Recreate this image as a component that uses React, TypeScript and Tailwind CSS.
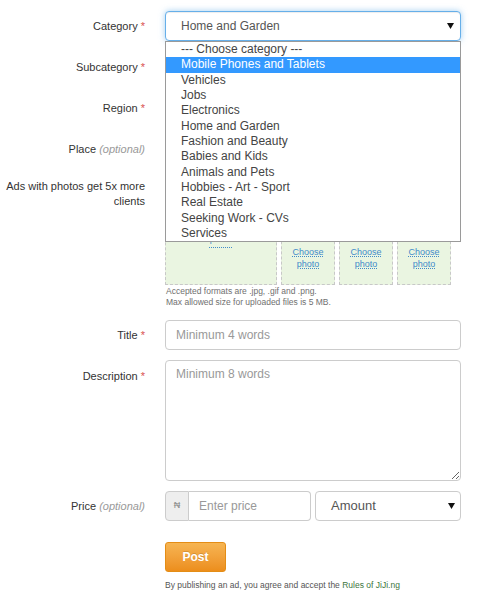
import React from "react";

const FONT = "font-['Liberation_Sans',Arial,Helvetica,sans-serif]";

function Req() {
  return <span className="text-[#d9534f]"> *</span>;
}
function Opt() {
  return <span className="italic text-[#999]"> (optional)</span>;
}

function Arrow() {
  return (
    <svg width="7" height="6" viewBox="0 0 7 6" className="block">
      <path d="M0 0 H7 L3.5 6 Z" fill="#111" />
    </svg>
  );
}

function FakeSelect({ text, focused }: { text: string; focused?: boolean }) {
  return (
    <div
      className={
        "flex h-[30px] items-center justify-between rounded-[4px] border bg-white pl-[15px] pr-[6px] text-[12px] text-[#555] " +
        (focused
          ? "border-[#66afe9] shadow-[inset_0_1px_1px_rgba(0,0,0,0.075),0_0_6px_rgba(102,175,233,0.6)]"
          : "border-[#ccc]")
      }
    >
      <span>{text}</span>
      <Arrow />
    </div>
  );
}

const categories = [
  "--- Choose category ---",
  "Mobile Phones and Tablets",
  "Vehicles",
  "Jobs",
  "Electronics",
  "Home and Garden",
  "Fashion and Beauty",
  "Babies and Kids",
  "Animals and Pets",
  "Hobbies - Art - Sport",
  "Real Estate",
  "Seeking Work - CVs",
  "Services",
];

function Row({
  label,
  children,
  className = "",
  labelClass = "items-center",
}: {
  label: React.ReactNode;
  children: React.ReactNode;
  className?: string;
  labelClass?: string;
}) {
  return (
    <div className={"flex " + className}>
      <div className={"flex w-[145px] shrink-0 justify-end text-right text-[11px] leading-[15px] text-[#333] " + labelClass}>
        <div>{label}</div>
      </div>
      <div className="ml-[20px] w-[296px]">{children}</div>
    </div>
  );
}

function PhotoBox({ big }: { big?: boolean }) {
  return (
    <div
      className={
        "flex flex-col items-center justify-center border border-dashed border-[#c8c8c8] bg-[#eaf5e1] text-center text-[9px] leading-[12px] text-[#428bca] " +
        (big ? "col-span-2 row-span-2 pt-[8px]" : "")
      }
    >
      <span className={"underline decoration-dotted " + (big ? "underline-offset-[5px]" : "underline-offset-[1px]")}>Choose</span>
      <span className={"underline decoration-dotted " + (big ? "underline-offset-[5px]" : "underline-offset-[1px]")}>photo</span>
    </div>
  );
}

export default function App() {
  return (
    <div className={"relative h-[609px] w-[495px] overflow-hidden bg-white " + FONT}>
      <div className="flex flex-col pt-[11px]">
        <Row label={<>Category<Req /></>} className="h-[30px]">
          <div className="relative">
            <FakeSelect text="Home and Garden" focused />
            <div className="absolute left-0 top-[30px] z-10 w-[296px] border border-[#9a9a9a] bg-white">
              {categories.map((c, i) => (
                <div
                  key={c}
                  className={
                    "h-[15.33px] pl-[15px] text-[12px] leading-[15.33px] " +
                    (i === 1 ? "bg-[#3399ff] text-white" : "text-[#444]")
                  }
                >
                  {c}
                </div>
              ))}
            </div>
          </div>
        </Row>
        <Row label={<>Subcategory<Req /></>} className="mt-[11px] h-[30px]">
          <FakeSelect text="" />
        </Row>
        <Row label={<>Region<Req /></>} className="mt-[11px] h-[30px]">
          <FakeSelect text="" />
        </Row>
        <Row label={<>Place<Opt /></>} className="mt-[11px] h-[30px]">
          <FakeSelect text="" />
        </Row>
        <Row
          label={<>Ads with photos get 5x more clients</>}
          className="mt-[9px]"
          labelClass="items-start pt-[6px]"
        >
          <div className="grid w-[286px] grid-cols-[repeat(5,54px)] grid-rows-[repeat(2,54px)] gap-[4px]">
            <PhotoBox big />
            <PhotoBox />
            <PhotoBox />
            <PhotoBox />
            <PhotoBox />
            <PhotoBox />
            <PhotoBox />
          </div>
          <div className="mt-[1px] pl-[1px] text-[8.5px] leading-[11px] text-[#707070]">
            <div>Accepted formats are .jpg, .gif and .png.</div>
            <div>Max allowed size for uploaded files is 5 MB.</div>
          </div>
        </Row>
        <Row label={<>Title<Req /></>} className="mt-[12px] h-[30px]">
          <input
            className="h-[30px] w-full rounded-[4px] border border-[#ccc] bg-white px-[10px] text-[12px] text-[#555] outline-none placeholder:text-[#999]"
            placeholder="Minimum 4 words"
          />
        </Row>
        <Row label={<>Description<Req /></>} className="mt-[10px]" labelClass="items-start pt-[9px]">
          <textarea
            className="block h-[121px] w-full rounded-[4px] border border-[#ccc] bg-white px-[10px] py-[5px] text-[12px] leading-[16px] text-[#555] outline-none placeholder:text-[#999]"
            placeholder="Minimum 8 words"
          />
        </Row>
        <Row label={<>Price<Opt /></>} className="mt-[10px] h-[30px]">
          <div className="flex h-[30px] gap-[4px]">
            <div className="flex w-[146px] shrink-0">
              <div className="flex w-[24px] shrink-0 items-center justify-center rounded-l-[4px] border border-[#ccc] bg-[#eee] text-[9px] text-[#888]">
                ₦
              </div>
              <input
                className="h-[30px] min-w-0 flex-1 rounded-r-[4px] border border-l-0 border-[#ccc] bg-white px-[10px] text-[12px] text-[#555] outline-none placeholder:text-[#999]"
                placeholder="Enter price"
              />
            </div>
            <div className="flex h-[30px] flex-1 items-center justify-between rounded-[4px] border border-[#ccc] bg-white pl-[15px] pr-[5px] text-[13px] text-[#555]">
              <span>Amount</span>
              <Arrow />
            </div>
          </div>
        </Row>
        <Row label="" className="mt-[21px]">
          <button className="h-[30px] w-[61px] rounded-[3px] border border-[#e48d16] bg-linear-to-b from-[#f6b552] to-[#ec8e1b] text-[12px] font-bold text-white [text-shadow:0_-1px_0_rgba(0,0,0,0.15)]">
            Post
          </button>
          <div className="mt-[7px] text-[8.5px] leading-[12px] text-[#555]">
            By publishing an ad, you agree and accept the <span className="text-[#3c763d]">Rules of JiJi.ng</span>
          </div>
        </Row>
      </div>
    </div>
  );
}
